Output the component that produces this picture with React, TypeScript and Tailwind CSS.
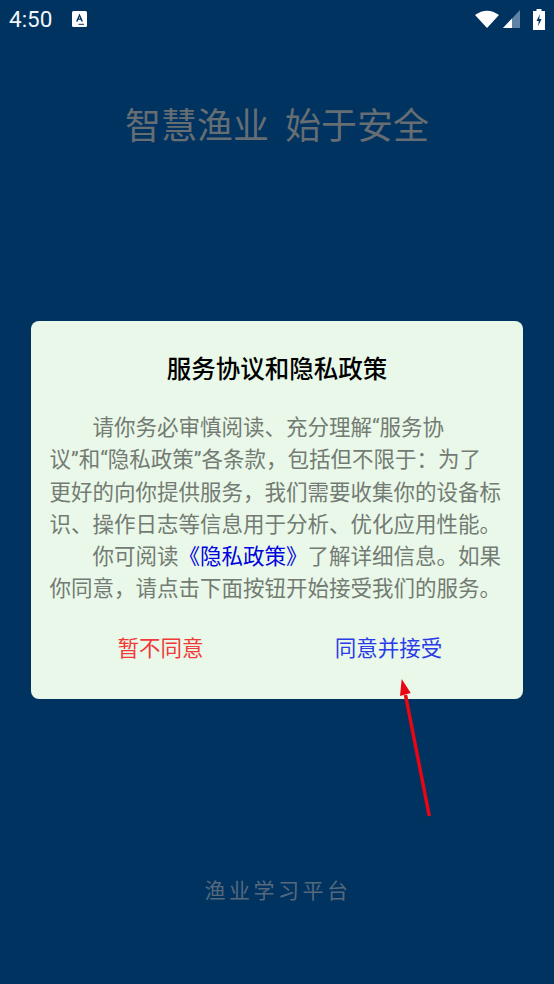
const cjk = "font-['Roboto','Noto_Sans_CJK_SC',sans-serif]";

function StatusBar() {
  return (
    <div className="flex h-[38px] items-center justify-between pr-[9px] pl-[9px] text-white">
      <div className="flex items-center gap-[20px]">
        <span className="font-['Roboto',sans-serif] text-[22.5px] leading-none text-[#f1f5f8]">4:50</span>
        <svg width="15" height="16" viewBox="0 0 15 16">
          <rect x="0" y="0" width="15" height="16" rx="1.5" fill="#fff" />
          <path d="M7.5 2.5 11 10.5H9.3L8.6 8.8H6.4L5.7 10.5H4ZM6.9 7.6H8.1L7.5 5.6Z" fill="#003360" />
          <rect x="6.5" y="12.8" width="5.5" height="1" fill="#003360" />
        </svg>
      </div>
      <div className="flex items-center">
        <svg width="24" height="18" viewBox="0 0 24 18">
          <path d="M0 5Q12-3.5 24 5L12 18Z" fill="#fff" />
        </svg>
        <svg width="18" height="18" viewBox="0 0 18 18" className="ml-[4px]">
          <path d="M0 18 17 0V18Z" fill="#5f83a5" />
          <path d="M0 18 9 8.5V18Z" fill="#fff" />
        </svg>
        <svg width="12" height="21" viewBox="0 0 12 21" className="ml-[12px]">
          <path d="M3.5 0H8.5V2H12V21H0V2H3.5Z" fill="#fff" />
          <path d="M7 5 3.5 12H5.8L5 17.5 8.5 10H6.2Z" fill="#003360" />
        </svg>
      </div>
    </div>
  );
}

export default function App() {
  return (
    <div className={`relative flex h-[984px] w-[554px] flex-col overflow-hidden bg-[#003360] ${cjk}`}>
      <StatusBar />
      <h1 className="mt-[66px] text-center text-[36px] leading-[46px] font-normal [word-spacing:7px] text-[#666d73]">智慧渔业 始于安全</h1>

      <div className="mx-[31px] mt-[171px] flex h-[378px] flex-col rounded-[8px] bg-[#e9f8e8]">
        <h2 className="mt-[33px] text-center text-[24.5px] leading-[32px] font-medium text-black">服务协议和隐私政策</h2>
        <div className="mt-[26px] pr-[19px] pl-[18.5px] text-[21.5px] leading-[32.3px] text-[#737b74]">
          <p className="pl-[43px]">请你务必审慎阅读、充分理解“服务协</p>
          <p>议”和“隐私政策”各条款，包括但不限于：为了</p>
          <p>更好的向你提供服务，我们需要收集你的设备标</p>
          <p>识、操作日志等信息用于分析、优化应用性能。</p>
          <p className="pl-[43px]">
            你可阅读<span className="text-[#0000e0]">《隐私政策》</span>了解详细信息。如果
          </p>
          <p>你同意，请点击下面按钮开始接受我们的服务。</p>
        </div>
        <div className="mt-[27px] flex text-[21.5px] leading-[32px]">
          <button className="w-[259px] text-center text-[#f03a3a]">暂不同意</button>
          <button className="w-[233px] pr-[36px] text-center text-[#2a3ce8]">同意并接受</button>
        </div>
      </div>

      <p className="mt-[178px] pl-[2px] text-center text-[21px] leading-[28px] tracking-[3.5px] text-[#56697c]">渔业学习平台</p>

      {/* annotation arrow drawn on top of the screenshot */}
      <svg className="absolute top-[675px] left-[395px]" width="40" height="145" viewBox="0 0 40 145">
        <line x1="34.3" y1="141" x2="10.5" y2="20" stroke="#e80514" strokeWidth="3.5" />
        <path d="M6.7 4 15.7 18 5 21Z" fill="#e80514" />
      </svg>
    </div>
  );
}
